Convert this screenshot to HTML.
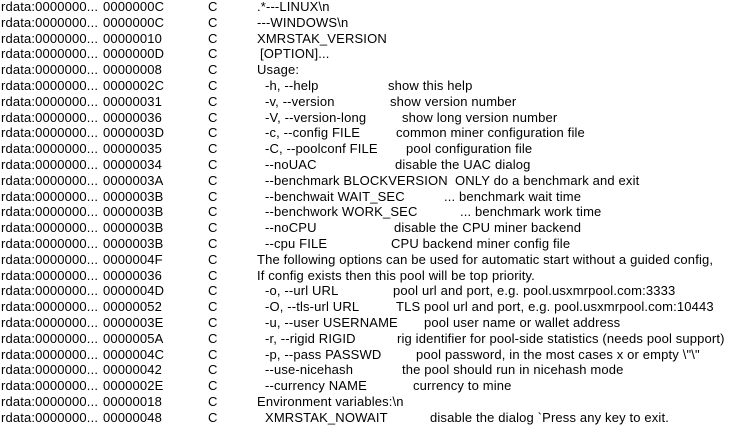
<!DOCTYPE html>
<html><head><meta charset="utf-8"><style>
html,body{margin:0;padding:0;background:#fff;width:739px;height:430px;overflow:hidden}
body{font-family:"Liberation Sans","DejaVu Sans",sans-serif;font-size:13px;letter-spacing:0.15px;color:#000;position:relative}
.r{position:absolute;left:0;width:739px;height:16px;line-height:16px;white-space:pre}
.r span{position:absolute;top:0}
.a{left:1px}.b{left:103px}.c{left:208px}
</style></head><body>
<div id="w"></div>
<script>
var rows=[
["0000000C",".*---LINUX\\n",257],
["0000000C","---WINDOWS\\n",257],
["00000010","XMRSTAK_VERSION",257],
["0000000D","[OPTION]...",260],
["00000008","Usage:",257],
["0000002C","-h, --help",265,"show this help",388],
["00000031","-v, --version",265,"show version number",390],
["00000036","-V, --version-long",265,"show long version number",402],
["0000003D","-c, --config FILE",265,"common miner configuration file",396],
["00000035","-C, --poolconf FILE",265,"pool configuration file",406],
["00000034","--noUAC",265,"disable the UAC dialog",395],
["0000003A","--benchmark BLOCKVERSION",265,"ONLY do a benchmark and exit",455],
["0000003B","--benchwait WAIT_SEC",265,"... benchmark wait time",444],
["0000003B","--benchwork WORK_SEC",265,"... benchmark work time",460],
["0000003B","--noCPU",265,"disable the CPU miner backend",394],
["0000003B","--cpu FILE",265,"CPU backend miner config file",391],
["0000004F","The following options can be used for automatic start without a guided config,",257],
["00000036","If config exists then this pool will be top priority.",257],
["0000004D","-o, --url URL",265,"pool url and port, e.g. pool.usxmrpool.com:3333",393],
["00000052","-O, --tls-url URL",265,"TLS pool url and port, e.g. pool.usxmrpool.com:10443",396],
["0000003E","-u, --user USERNAME",265,"pool user name or wallet address",424],
["0000005A","-r, --rigid RIGID",265,"rig identifier for pool-side statistics (needs pool support)",397],
["0000004C","-p, --pass PASSWD",265,"pool password, in the most cases x or empty \\\"\\\"",416],
["00000042","--use-nicehash",265,"the pool should run in nicehash mode",402],
["0000002E","--currency NAME",265,"currency to mine",413],
["00000018","Environment variables:\\n",257],
["00000048","XMRSTAK_NOWAIT",265,"disable the dialog `Press any key to exit.",430]
];
var h="";
function esc(s){return s.replace(/&/g,"&amp;").replace(/</g,"&lt;")}
rows.forEach(function(r,i){
 var t=(i*15.8-1).toFixed(1);
 h+='<div class="r" style="top:'+t+'px"><span class="a">rdata:0000000...</span><span class="b">'+r[0]+'</span><span class="c">C</span><span style="left:'+r[2]+'px">'+esc(r[1])+'</span>';
 if(r[3])h+='<span style="left:'+r[4]+'px">'+esc(r[3])+'</span>';
 h+='</div>';
});
document.getElementById("w").innerHTML=h;
</script>
</body></html>
